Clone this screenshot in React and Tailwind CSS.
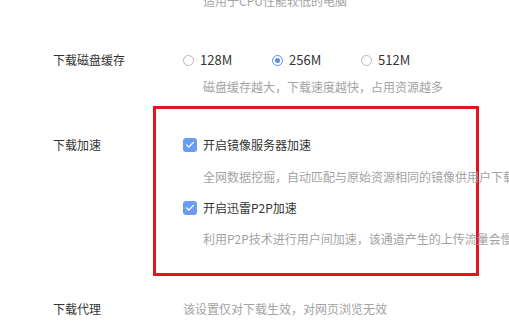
import { Check } from 'lucide-react'

const font = { fontFamily: '"Noto Sans CJK SC", "Noto Sans", sans-serif' }

function Radio({ label, checked }) {
  return (
    <div className="flex items-center w-[89px] shrink-0">
      <span
        className={`w-[11px] h-[11px] rounded-full border flex items-center justify-center ${
          checked ? 'border-[#5b8def]' : 'border-[#b8b8b8]'
        }`}
      >
        {checked && <span className="w-[5px] h-[5px] rounded-full bg-[#5b8def]" />}
      </span>
      <span className="ml-[6px] text-[13px] text-[#333]">{label}</span>
    </div>
  )
}

function CheckRow({ label }) {
  return (
    <div className="flex items-center h-5">
      <span className="w-[14px] h-[14px] rounded-[3px] bg-[#6b9cf5] flex items-center justify-center">
        <Check size={10} strokeWidth={3} className="text-white" />
      </span>
      <span className="ml-[6px] text-[#333]">{label}</span>
    </div>
  )
}

export default function App() {
  return (
    <div className="w-[509px] h-[328px] overflow-hidden bg-white text-[12px] leading-5 whitespace-nowrap" style={font}>
      {/* previous option's hint, mostly scrolled away */}
      <div className="-mt-[9px] pl-[203px] h-5 text-[#a3a3a3]">适用于CPU性能较低的电脑</div>

      {/* disk cache */}
      <div className="mt-[39px] flex items-center h-5 pl-[53px]">
        <div className="w-[130px] shrink-0 text-[#333]">下载磁盘缓存</div>
        <Radio label="128M" />
        <Radio label="256M" checked />
        <Radio label="512M" />
      </div>
      <div className="mt-[7px] pl-[203px] h-5 text-[#a3a3a3]">磁盘缓存越大，下载速度越快，占用资源越多</div>

      {/* acceleration */}
      <div className="mt-[9px] flex items-start pl-[53px]">
        <div className="w-[100px] shrink-0 mt-[29px] text-[#333]">下载加速</div>
        <div className="w-[326px] h-[170px] shrink-0 border-[3px] border-[#e3141b] pl-[27px] pt-[26px]">
          <CheckRow label="开启镜像服务器加速" />
          <div className="mt-[12px] pl-[20px] h-5 text-[#a3a3a3]">全网数据挖掘，自动匹配与原始资源相同的镜像供用户下载</div>
          <div className="mt-[11px]">
            <CheckRow label="开启迅雷P2P加速" />
          </div>
          <div className="mt-[11px] pl-[20px] h-5 text-[#a3a3a3]">利用P2P技术进行用户间加速，该通道产生的上传流量会慢慢增加</div>
        </div>
      </div>

      {/* proxy */}
      <div className="mt-[23px] flex items-center h-5 pl-[53px]">
        <div className="w-[130px] shrink-0 text-[#333]">下载代理</div>
        <div className="text-[#a3a3a3]">该设置仅对下载生效，对网页浏览无效</div>
      </div>
    </div>
  )
}
